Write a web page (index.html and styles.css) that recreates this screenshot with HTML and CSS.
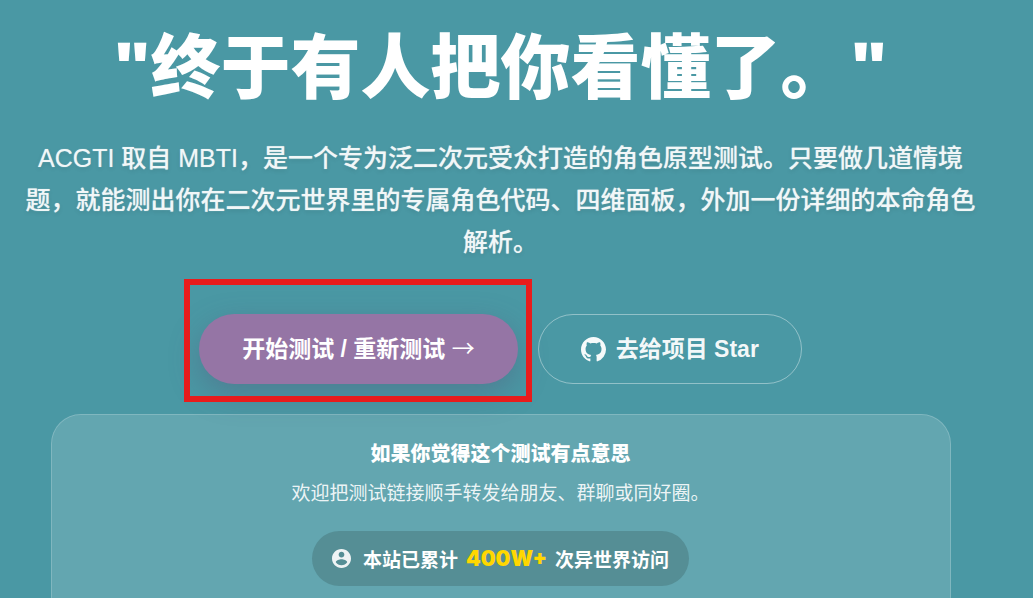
FILE: index.html
```html
<!DOCTYPE html>
<html lang="zh-CN">
<head>
    <meta charset="UTF-8">
    <meta name="viewport" content="width=device-width, initial-scale=1.0">
    <title>ACGTI</title>
    <link rel="stylesheet" href="styles.css">
</head>
<body>
    <main class="hero">
        <h1 class="hero-title">"终于有人把你看懂了。"</h1>
        <p class="hero-desc">ACGTI 取自 MBTI，是一个专为泛二次元受众打造的角色原型测试。只要做几道情境题，就能测出你在二次元世界里的专属角色代码、四维面板，外加一份详细的本命角色解析。</p>

        <div class="actions">
            <div class="highlight">
                <button type="button" class="btn btn-primary"><span>开始测试 / 重新测试 <span class="arrow">→</span></span></button>
            </div>
            <a href="#star" class="btn btn-outline">
                <svg class="github-icon" viewBox="0 0 16 16" aria-hidden="true">
                    <path fill="currentColor" d="M8 0C3.58 0 0 3.58 0 8c0 3.54 2.29 6.53 5.47 7.59.4.07.55-.17.55-.38 0-.19-.01-.82-.01-1.49-2.01.37-2.53-.49-2.69-.94-.09-.23-.48-.94-.82-1.13-.28-.15-.68-.52-.01-.53.63-.01 1.08.58 1.23.82.72 1.21 1.87.87 2.33.66.07-.52.28-.87.51-1.07-1.78-.2-3.64-.89-3.64-3.95 0-.87.31-1.59.82-2.15-.08-.2-.36-1.02.08-2.12 0 0 .67-.21 2.2.82.64-.18 1.32-.27 2-.27s1.36.09 2 .27c1.53-1.04 2.2-.82 2.2-.82.44 1.1.16 1.92.08 2.12.51.56.82 1.27.82 2.15 0 3.07-1.87 3.75-3.65 3.95.29.25.54.73.54 1.48 0 1.07-.01 1.93-.01 2.2 0 .21.15.46.55.38A8.01 8.01 0 0 0 16 8c0-4.42-3.58-8-8-8z"/>
                </svg>
                <span>去给项目 Star</span>
            </a>
        </div>

        <section class="share-card">
            <h2 class="share-title">如果你觉得这个测试有点意思</h2>
            <p class="share-text">欢迎把测试链接顺手转发给朋友、群聊或同好圈。</p>
            <div class="visits">
                <svg class="user-icon" viewBox="2 2 20 20" aria-hidden="true">
                    <path fill="currentColor" d="M12 2C6.48 2 2 6.48 2 12s4.48 10 10 10 10-4.48 10-10S17.52 2 12 2zm0 3c1.66 0 3 1.34 3 3s-1.34 3-3 3-3-1.34-3-3 1.34-3 3-3zm0 14.2c-2.5 0-4.71-1.28-6-3.22.03-1.99 4-3.08 6-3.08 1.99 0 5.97 1.09 6 3.08-1.29 1.94-3.5 3.22-6 3.22z"/>
                </svg>
                <span>本站已累计</span>
                <strong class="visits-count">400W+</strong>
                <span>次异世界访问</span>
            </div>
        </section>
    </main>
</body>
</html>
```
FILE: styles.css
```css
* {
    box-sizing: border-box;
}
body {
    margin: 0;
    background-color: #4a98a4;
    font-family: "Liberation Sans", "Noto Sans CJK SC", sans-serif;
    color: white;
    overflow: hidden;
}
.hero {
    display: flex;
    flex-direction: column;
    align-items: center;
    padding: 24px 56px 0 24px;
    text-align: center;
}
.hero-title {
    margin: 0;
    font-family: "Open Sans", "Noto Sans CJK SC", sans-serif;
    font-size: 70px;
    line-height: 84px;
    font-weight: 900;
}
.hero-desc {
    margin: 29px 0 0;
    font-size: 25px;
    line-height: 42px;
    font-weight: 500;
    color: rgba(255, 255, 255, 0.85);
    text-shadow: 0 0 1px rgba(255, 255, 255, 0.6), 0 2px 4px rgba(0, 0, 0, 0.1);
}
.actions {
    display: flex;
    gap: 20px;
    margin-top: 51px;
}
.btn {
    display: flex;
    align-items: center;
    justify-content: center;
    gap: 10px;
    height: 70px;
    padding: 0 42px;
    border: 1px solid transparent;
    border-radius: 35px;
    font-family: inherit;
    font-size: 23px;
    font-weight: 700;
    color: white;
    text-decoration: none;
    white-space: nowrap;
    cursor: pointer;
}
.btn > span {
    padding-bottom: 5px;
}
.btn-primary {
    background: #9575a5;
    box-shadow: 0 10px 30px rgba(85, 85, 120, 0.4);
}
.arrow {
    font-family: "Noto Sans CJK SC", sans-serif;
    font-weight: 400;
}
.btn-outline {
    border-color: rgba(255, 255, 255, 0.4);
    color: rgba(255, 255, 255, 0.95);
}
.github-icon {
    width: 25px;
    height: 25px;
}
/* red frame around the start button */
.highlight {
    position: relative;
}
.highlight::after {
    content: "";
    position: absolute;
    inset: -35px -14px -18px -15px;
    border: 6px solid #e81c1c;
    pointer-events: none;
}
.share-card {
    display: flex;
    flex-direction: column;
    align-items: center;
    width: 100%;
    max-width: 900px;
    margin-top: 30px;
    padding: 24px 24px 40px;
    border: 1px solid rgba(255, 255, 255, 0.3);
    border-radius: 30px;
    background: #63a6b0;
    background-clip: padding-box;
}
.share-title {
    margin: 0;
    font-size: 20px;
    line-height: 30px;
    font-weight: 800;
}
.share-text {
    margin: 8px 0 0;
    font-size: 19px;
    line-height: 34px;
    color: rgba(255, 255, 255, 0.9);
}
.visits {
    display: flex;
    align-items: center;
    gap: 8px;
    height: 55px;
    margin-top: 20px;
    padding: 0 20px;
    border-radius: 28px;
    background: #558e95;
    font-size: 19px;
    font-weight: 700;
}
.user-icon {
    width: 19px;
    height: 19px;
    margin-right: 4px;
    opacity: 0.9;
}
.visits-count {
    font-family: Inter, sans-serif;
    font-size: 21px;
    font-weight: 900;
    color: #ffd700;
}
```
